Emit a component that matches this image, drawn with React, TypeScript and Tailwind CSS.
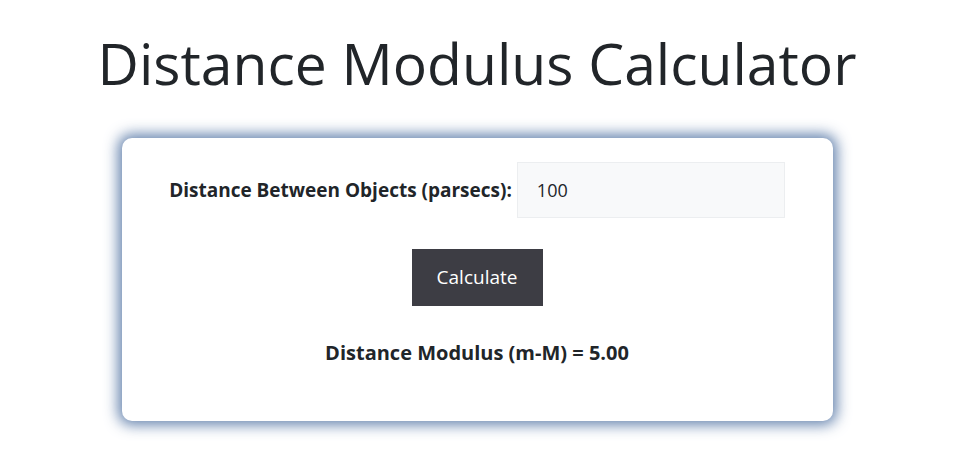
import React from "react";

export default function App() {
  return (
    <div className="w-[954px] h-[467px] bg-white" style={{ fontFamily: '"Open Sans", "Noto Sans", sans-serif' }}>
      <h1 className="text-center text-[57px] leading-[80px] pt-[23px] text-[#212529] font-normal">
        Distance Modulus Calculator
      </h1>
      <div className="mx-auto mt-[35px] w-[711px] h-[283px] rounded-[10px] bg-white shadow-[0_0_14px_4px_rgba(75,110,160,0.85)] pt-[24px] flex flex-col items-center">
        <div className="flex items-center gap-[5px]">
          <label className="text-[19px] font-bold text-[#212529]">
            Distance Between Objects (parsecs):
          </label>
          <div className="w-[268px] h-[56px] bg-[#f8f9fa] border border-[#eceef0] flex items-center pl-[19px] text-[18px] text-[#212529]">
            100
          </div>
        </div>
        <button className="mt-[31px] w-[131px] h-[57px] bg-[#3d3d44] text-white text-[19px]">
          Calculate
        </button>
        <div className="mt-[32px] text-[20px] font-bold text-[#212529]">
          Distance Modulus (m-M) = 5.00
        </div>
      </div>
    </div>
  );
}
